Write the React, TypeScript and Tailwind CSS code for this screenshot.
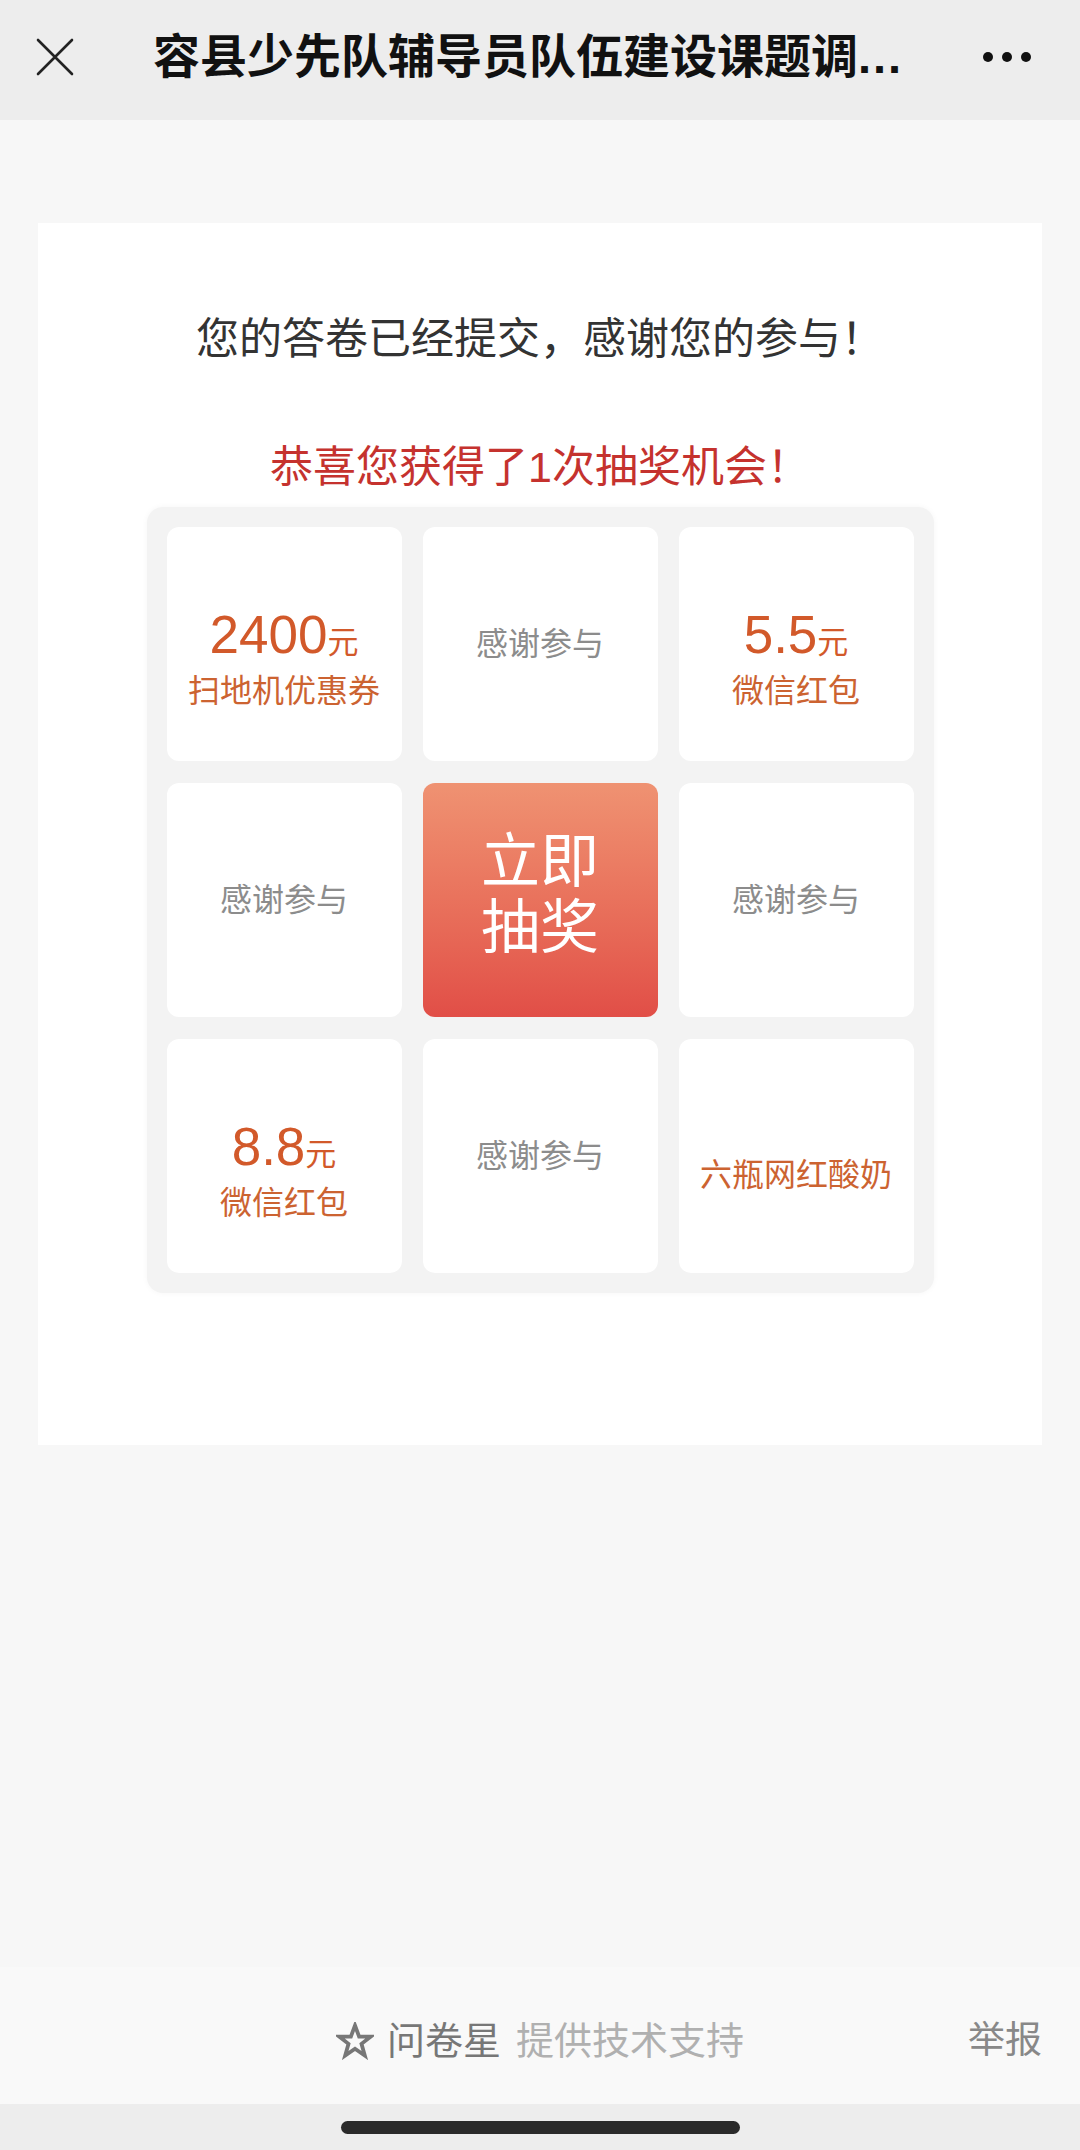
import React from 'react';

const FONT = '"Liberation Sans", "Noto Sans CJK SC", sans-serif';

type Cell =
    | { kind: 'thanks' }
    | { kind: 'amount'; amount: string; label: string }
    | { kind: 'gift'; label: string }
    | { kind: 'draw' };

const CELLS: Cell[] = [
    { kind: 'amount', amount: '2400', label: '扫地机优惠券' },
    { kind: 'thanks' },
    { kind: 'amount', amount: '5.5', label: '微信红包' },
    { kind: 'thanks' },
    { kind: 'draw' },
    { kind: 'thanks' },
    { kind: 'amount', amount: '8.8', label: '微信红包' },
    { kind: 'thanks' },
    { kind: 'gift', label: '六瓶网红酸奶' },
];

function CloseIcon() {
    return (
        <svg width="38" height="38" viewBox="0 0 38 38" fill="none" stroke="#222" strokeWidth="2.6" strokeLinecap="round">
            <path d="M2 2 L36 36 M36 2 L2 36" />
        </svg>
    );
}

function StarIcon() {
    return (
        <svg width="38" height="38" viewBox="0 0 24 24" fill="none" stroke="#777" strokeWidth="2.4" strokeLinejoin="miter">
            <path d="M12 2.2 L14.6 9.2 L21.8 9.3 L16.1 13.8 L18.2 21.2 L12 16.9 L5.8 21.2 L7.9 13.8 L2.2 9.3 L9.4 9.2 Z" />
        </svg>
    );
}

function PrizeCell({ cell }: { cell: Cell }) {
    if (cell.kind === 'draw') {
        return (
            <div className="flex flex-col items-center justify-center rounded-[12px] bg-linear-to-b from-[#ef9272] to-[#e14e47] pb-[10px] text-[59px] leading-[66px] text-white">
                <span>立即</span>
                <span>抽奖</span>
            </div>
        );
    }
    if (cell.kind === 'thanks') {
        return (
            <div className="flex items-center justify-center rounded-[12px] bg-white text-[32px] leading-[44px] text-[#8c8c8c]">
                感谢参与
            </div>
        );
    }
    if (cell.kind === 'gift') {
        return (
            <div className="flex items-center justify-center rounded-[12px] bg-white pt-[38px] text-[32px] leading-[44px] text-[#cc6331]">
                {cell.label}
            </div>
        );
    }
    return (
        <div className="flex flex-col items-center justify-center rounded-[12px] bg-white pt-[32px]">
            <div className="flex items-baseline leading-[56px] text-[#d2592a]">
                <span className="text-[53px]">{cell.amount}</span>
                <span className="text-[31px]">元</span>
            </div>
            <div className="-mt-[2px] text-[32px] leading-[44px] text-[#cc6331]">{cell.label}</div>
        </div>
    );
}

export default function App() {
    return (
        <div className="flex h-[2150px] w-[1080px] flex-col bg-[#f7f7f7]" style={{ fontFamily: FONT }}>
            {/* top bar */}
            <header className="flex h-[120px] shrink-0 items-center bg-[#ededed] pb-[6px] pl-[36px] pr-[49px]">
                <CloseIcon />
                <h1 className="ml-[79px] flex-1 text-[47px] font-semibold leading-[56px] text-[#111]">
                    容县少先队辅导员队伍建设课题调<span className="tracking-[2px]">...</span>
                </h1>
                <div className="flex items-center gap-[9px]">
                    <span className="h-[10px] w-[10px] rounded-full bg-[#111]" />
                    <span className="h-[10px] w-[10px] rounded-full bg-[#111]" />
                    <span className="h-[10px] w-[10px] rounded-full bg-[#111]" />
                </div>
            </header>

            {/* body */}
            <main className="flex-1 pt-[103px]">
                <section className="mx-[38px] flex h-[1222px] flex-col items-center bg-white pt-[88px]">
                    <p className="text-[43px] leading-[56px] text-[#333]">您的答卷已经提交，感谢您的参与！</p>
                    <p className="mt-[72px] text-[43px] leading-[56px] text-[#c5322e]">恭喜您获得了1次抽奖机会！</p>

                    <div className="mt-[12px] grid grid-cols-[repeat(3,235px)] grid-rows-[repeat(3,234px)] gap-x-[21px] gap-y-[22px] rounded-[16px] bg-[#f3f3f3] p-[20px] shadow-[0_0_6px_rgba(0,0,0,0.04)]">
                        {CELLS.map((cell, i) => (
                            <PrizeCell key={i} cell={cell} />
                        ))}
                    </div>
                </section>
            </main>

            {/* footer */}
            <footer className="grid h-[137px] shrink-0 grid-cols-[1fr_auto_1fr] items-center bg-[#f9f9f9] pt-[10px]">
                <div />
                <div className="flex items-center text-[38px] leading-[48px]">
                    <StarIcon />
                    <span className="ml-[13px] text-[#777]">问卷星</span>
                    <span className="ml-[15px] text-[#b0b0b0]">提供技术支持</span>
                </div>
                <div className="justify-self-end pr-[38px] text-[37px] leading-[48px] text-[#888]">举报</div>
            </footer>

            <div className="flex h-[46px] shrink-0 justify-center bg-[#ededed] pt-[17px]">
                <div className="h-[13px] w-[399px] rounded-full bg-[#2a2a2a]" />
            </div>
        </div>
    );
}
